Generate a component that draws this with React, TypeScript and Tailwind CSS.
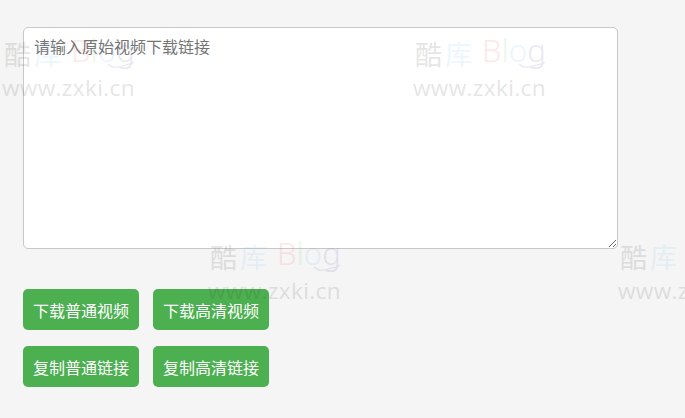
const cjk = { fontFamily: '"Noto Sans CJK SC", "Noto Sans", sans-serif' };

function Mark({ x, y }: { x: number; y: number }) {
  return (
    <div className="absolute flex w-[140px] flex-col pl-[2px] opacity-[0.12]" style={{ left: x, top: y }}>
      <div className="relative flex h-[35px] items-start whitespace-nowrap pl-[2px]">
        <div className="mt-[-6px] flex w-[67px] gap-[3px] text-[27px] leading-[40px] font-['Noto_Sans_CJK_SC',sans-serif]">
          <span className="text-[#333333]">酷</span>
          <span className="text-[#6cb8f0]">库</span>
        </div>
        <div className="mt-[-10px] text-[31px] font-light leading-[40px] font-['Noto_Sans',sans-serif]">
          <span className="text-[#ee4a3a]">B</span>
          <span className="text-[#4ccb4c]">l</span>
          <span className="text-[#5ab0f0]">o</span>
          <span className="text-[#5050a0]">g</span>
        </div>
        <svg className="absolute left-[105px] top-[21px]" width="28" height="8" viewBox="0 0 28 8" fill="none">
          <path d="M1 3 C5 7 10 7 15 5 C20 3 24 4 27 1" stroke="#5050a0" strokeWidth="1.2" />
        </svg>
      </div>
      <div className="text-[22.6px] leading-[26px] tracking-[0.35px] whitespace-nowrap text-[#333333] font-['Open_Sans',sans-serif]">www.zxki.cn</div>
    </div>
  );
}

const rows = [
  ["下载普通视频", "下载高清视频"],
  ["复制普通链接", "复制高清链接"],
];

export default function App() {
  return (
    <div className="relative h-[418px] w-[685px] overflow-hidden bg-[#f5f5f5] px-[23px] pt-[27px]" style={cjk}>
      <textarea
        placeholder="请输入原始视频下载链接"
        className="block h-[222px] w-[595px] rounded-[5px] border border-[#c8c8c8] bg-white px-[10px] pt-[6px] pb-[8px] text-[16px] leading-[24px] outline-none placeholder:text-[#757575]"
        style={cjk}
      />
      <div className="mt-[40px] flex flex-col gap-[16px]">
        {rows.map((row) => (
          <div key={row[0]} className="flex gap-[14px]">
            {row.map((t) => (
              <button key={t} className="h-[41px] w-[116px] rounded-[5px] bg-[#4caf50] text-center text-[16px] text-white">
                {t}
              </button>
            ))}
          </div>
        ))}
      </div>
      <div className="pointer-events-none absolute inset-0">
        <Mark x={0} y={40} />
        <Mark x={411} y={40} />
        <Mark x={206} y={243} />
        <Mark x={616} y={243} />
      </div>
    </div>
  );
}
